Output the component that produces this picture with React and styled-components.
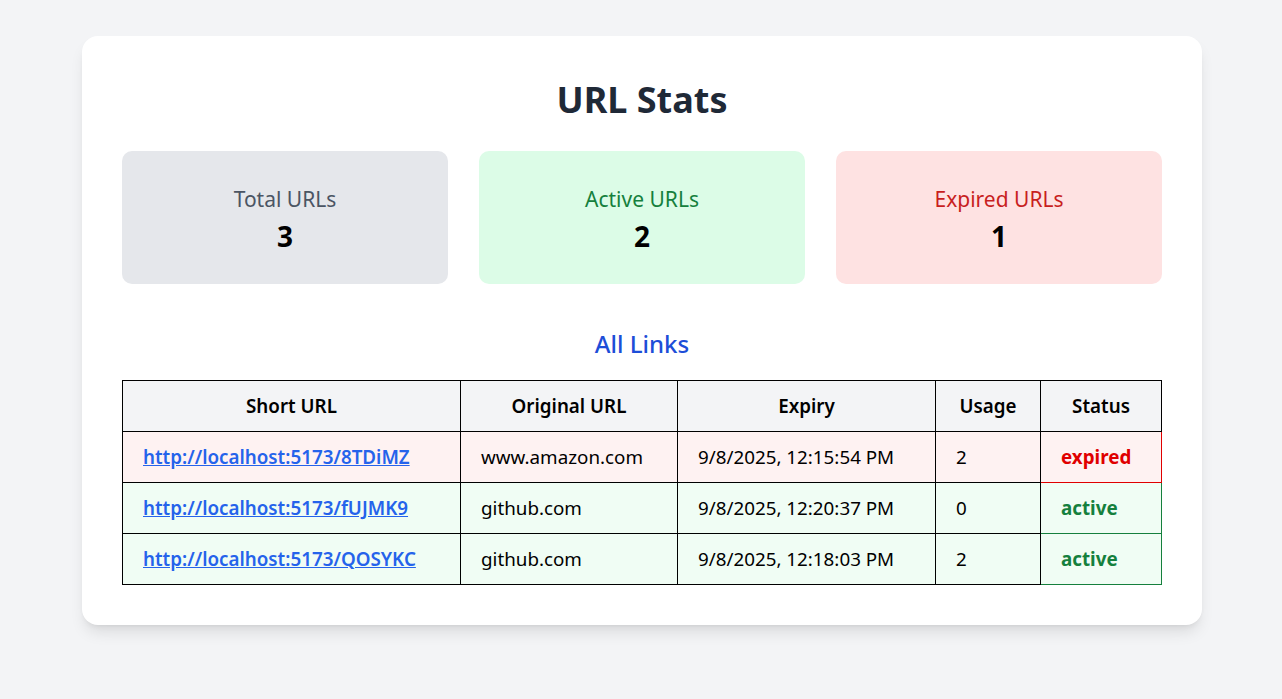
import React from "react";
import styled, { createGlobalStyle } from "styled-components";

const Global = createGlobalStyle`
  html, body { margin: 0; padding: 0; background: #f3f4f6; }
  body { font-family: "Noto Sans", "Open Sans", sans-serif; color: #111827; }
  * { box-sizing: border-box; }
`;

const Page = styled.div`
  min-height: 699px;
  padding-top: 36px;
  padding-left: 2px;
  display: flex;
  justify-content: center;
  align-items: flex-start;
`;

const Card = styled.div`
  width: 1120px;
  background: #ffffff;
  border-radius: 16px;
  padding: 40px;
  box-shadow: 0 10px 15px -3px rgba(0, 0, 0, 0.1), 0 4px 6px -4px rgba(0, 0, 0, 0.1);
`;

const Title = styled.h1`
  margin: 0;
  padding-top: 4px;
  font-size: 36px;
  line-height: 40px;
  font-weight: 700;
  text-align: center;
  color: #1f2937;
`;

const StatGrid = styled.div`
  margin-top: 31px;
  display: grid;
  grid-template-columns: repeat(3, 1fr);
  gap: 31px;
`;

const palette = {
  gray: { bg: "#e5e7eb", fg: "#4b5563" },
  green: { bg: "#dcfce7", fg: "#15803d" },
  red: { bg: "#fee2e2", fg: "#c81e1e" },
};

const StatCard = styled.div`
  height: 133px;
  border-radius: 10px;
  background: ${(p) => palette[p.$tone].bg};
  display: flex;
  flex-direction: column;
  align-items: center;
  justify-content: center;
  padding-top: 3px;
`;

const StatLabel = styled.div`
  font-size: 21px;
  line-height: 28px;
  color: ${(p) => palette[p.$tone].fg};
`;

const StatValue = styled.div`
  margin-top: 5px;
  font-size: 28px;
  line-height: 36px;
  font-weight: 700;
  color: #000000;
`;

const SectionTitle = styled.h2`
  margin: 44px 0 20px;
  font-size: 24px;
  line-height: 32px;
  font-weight: 500;
  text-align: center;
  color: #1d4ed8;
`;

const Table = styled.table`
  width: 100%;
  border-collapse: collapse;
  font-size: 18.8px;
  line-height: 26px;
`;

const Th = styled.th`
  background: #f3f4f6;
  border: 1px solid #000000;
  padding: 12px 20px;
  font-weight: 600;
  text-align: center;
  color: #000000;
  width: ${(p) => p.$w};
`;

const Row = styled.tr`
  background: ${(p) => (p.$expired ? "#fef2f2" : "#f0fdf4")};
`;

const Td = styled.td`
  border: 1px solid #000000;
  padding: 12px 20px;
  color: #000000;
  white-space: nowrap;
`;

const StatusTd = styled.td`
  border: 1px solid ${(p) => (p.$expired ? "#e00000" : "#15803d")};
  padding: 12px 20px;
  font-weight: 700;
  color: ${(p) => (p.$expired ? "#e00000" : "#15803d")};
`;

const Link = styled.a`
  color: #2563eb;
  font-weight: 600;
  text-decoration: underline;
`;

const stats = [
  { label: "Total URLs", value: 3, tone: "gray" },
  { label: "Active URLs", value: 2, tone: "green" },
  { label: "Expired URLs", value: 1, tone: "red" },
];

const links = [
  { short: "http://localhost:5173/8TDiMZ", orig: "www.amazon.com", expiry: "9/8/2025, 12:15:54 PM", usage: 2, status: "expired" },
  { short: "http://localhost:5173/fUJMK9", orig: "github.com", expiry: "9/8/2025, 12:20:37 PM", usage: 0, status: "active" },
  { short: "http://localhost:5173/QOSYKC", orig: "github.com", expiry: "9/8/2025, 12:18:03 PM", usage: 2, status: "active" },
];

export default function App() {
  return (
    <>
      <Global />
      <Page>
        <Card>
          <Title>URL Stats</Title>
          <StatGrid>
            {stats.map((s) => (
              <StatCard key={s.label} $tone={s.tone}>
                <StatLabel $tone={s.tone}>{s.label}</StatLabel>
                <StatValue>{s.value}</StatValue>
              </StatCard>
            ))}
          </StatGrid>
          <SectionTitle>All Links</SectionTitle>
          <Table>
            <thead>
              <tr>
                <Th $w="338px">Short URL</Th>
                <Th $w="217px">Original URL</Th>
                <Th $w="258px">Expiry</Th>
                <Th $w="105px">Usage</Th>
                <Th $w="121px">Status</Th>
              </tr>
            </thead>
            <tbody>
              {links.map((l) => (
                <Row key={l.short} $expired={l.status === "expired"}>
                  <Td><Link href="#">{l.short}</Link></Td>
                  <Td>{l.orig}</Td>
                  <Td>{l.expiry}</Td>
                  <Td>{l.usage}</Td>
                  <StatusTd $expired={l.status === "expired"}>{l.status}</StatusTd>
                </Row>
              ))}
            </tbody>
          </Table>
        </Card>
      </Page>
    </>
  );
}
